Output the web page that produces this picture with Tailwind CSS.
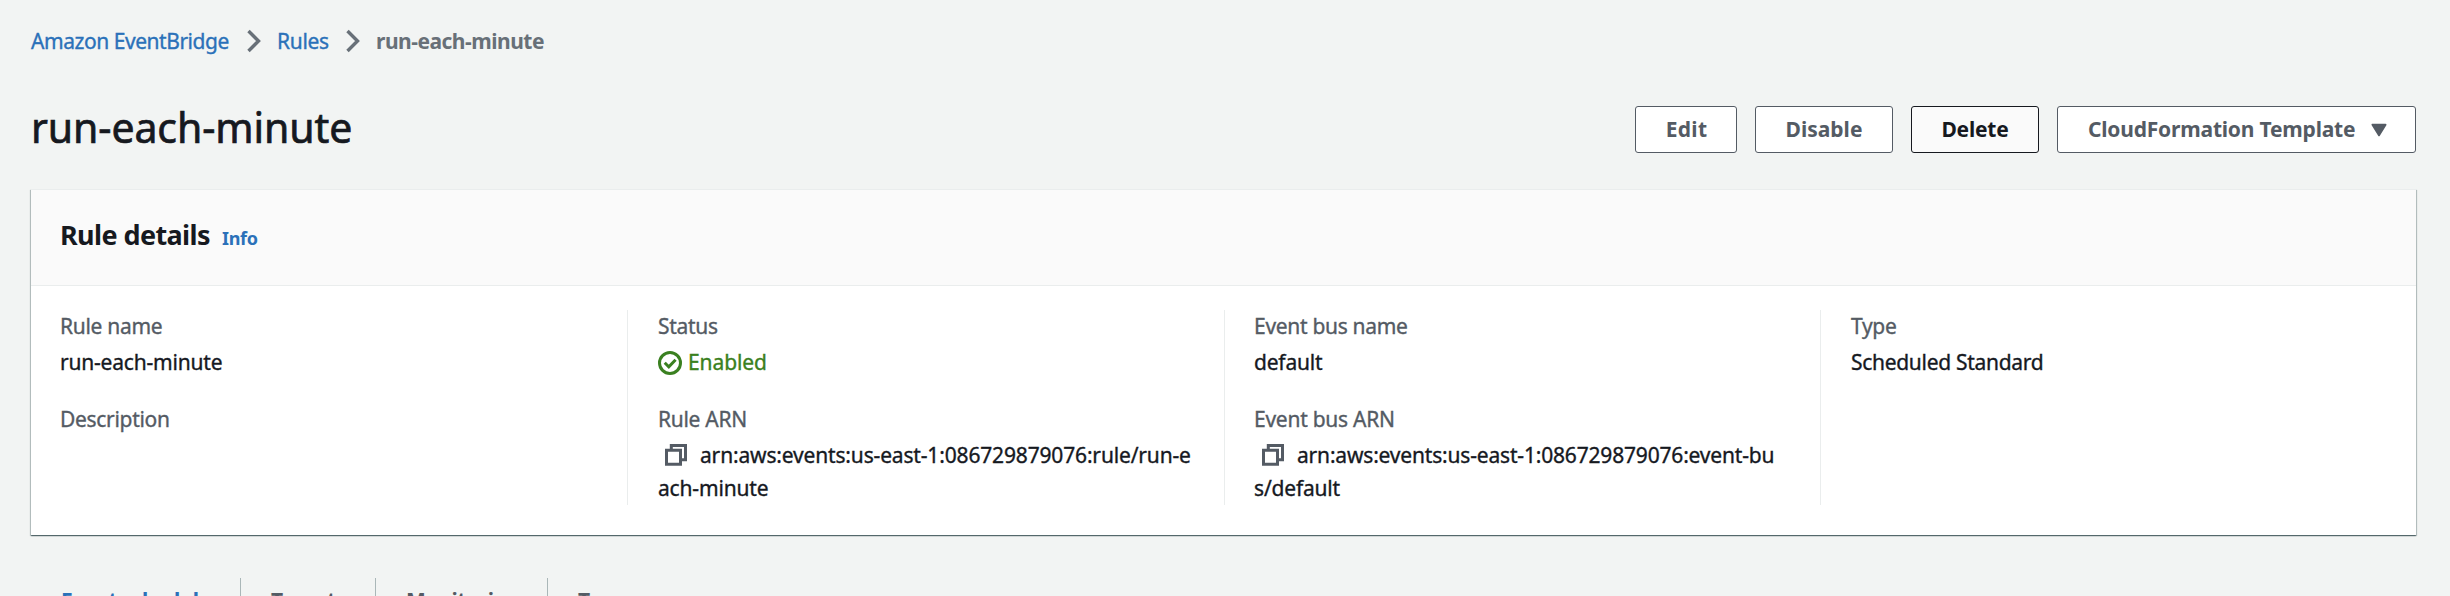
<!DOCTYPE html>
<html lang="en">
<head>
<meta charset="utf-8">
<title>Amazon EventBridge - run-each-minute</title>
<script src="https://cdn.jsdelivr.net/npm/@tailwindcss/browser@4"></script>
</head>
<body class="h-[596px] overflow-hidden bg-[#f2f4f3] font-['Noto_Sans',sans-serif] text-[21px] text-[#16191f]">
<div class="flex flex-col pl-[31px] pr-[34px] pt-[26px]">
  <nav class="flex h-[30px] items-center leading-[30px] text-[#687078]">
    <a class="w-[216px] whitespace-nowrap tracking-[-0.45px] text-[#2b71b9] [-webkit-text-stroke:0.35px]">Amazon EventBridge</a>
    <svg class="h-[24px] w-[14px] shrink-0" viewBox="0 0 14 24" fill="none" stroke="currentColor" stroke-width="3.4"><path d="M1.5 2 11.5 12 1.5 22"/></svg>
    <a class="ml-[16px] w-[69px] tracking-[-0.3px] text-[#2b71b9] [-webkit-text-stroke:0.35px]">Rules</a>
    <svg class="h-[24px] w-[14px] shrink-0" viewBox="0 0 14 24" fill="none" stroke="currentColor" stroke-width="3.4"><path d="M1.5 2 11.5 12 1.5 22"/></svg>
    <span class="ml-[16px] whitespace-nowrap font-bold tracking-[-0.5px]">run-each-minute</span>
  </nav>

  <header class="mt-[50px] flex h-[47px] items-start justify-between">
    <h1 class="-mt-[2px] whitespace-nowrap text-[41px] leading-[46px] tracking-[-0.1px] [-webkit-text-stroke:0.7px]">run-each-minute</h1>
    <div class="flex gap-[18px] font-bold text-[#545b64]">
      <button class="flex h-[47px] w-[102px] items-center justify-center rounded-[3px] border border-[#545b64] bg-white pl-px tracking-[0.3px]">Edit</button>
      <button class="flex h-[47px] w-[138px] items-center justify-center rounded-[3px] border border-[#545b64] bg-white">Disable</button>
      <button class="flex h-[47px] w-[128px] items-center justify-center rounded-[3px] border border-[#16191f] bg-[#fafafa] tracking-[-0.2px] text-[#16191f]">Delete</button>
      <button class="flex h-[47px] w-[359px] items-center justify-between rounded-[3px] border border-[#545b64] bg-white pl-[30px] pr-[28px] tracking-[-0.2px]">
        <span class="whitespace-nowrap">CloudFormation Template</span>
        <svg class="h-[14px] w-[16px]" viewBox="0 0 16 14" fill="currentColor" stroke="currentColor" stroke-width="2" stroke-linejoin="round"><path d="M1.5 1.7h13L8 12.3z"/></svg>
      </button>
    </div>
  </header>

  <section class="mt-[36px] h-[346px] bg-white shadow-[0_1px_1px_0_rgba(0,28,36,0.45),1px_1px_1px_0_rgba(0,28,36,0.2),-1px_1px_1px_0_rgba(0,28,36,0.2)]">
    <div class="flex h-[97px] items-baseline border-b border-t border-[#eaeded] bg-[#fafafa] pl-[29px] pt-[27px]">
      <h2 class="w-[162px] whitespace-nowrap text-[27px] font-bold leading-[36px] tracking-[-0.6px]">Rule details</h2>
      <a class="text-[18px] font-bold tracking-[-0.3px] text-[#2b71b9]">Info</a>
    </div>
    <div class="mt-[24px] grid h-[195px] grid-cols-[596px_597px_596px_596px] leading-[33px] [-webkit-text-stroke:0.35px]">
      <dl class="flex flex-col pl-[29px] pt-px tracking-[-0.3px]">
        <dt class="leading-[30px] text-[#545b64]">Rule name</dt>
        <dd class="mt-[5px] tracking-[-0.2px]">run-each-minute</dd>
        <dt class="mt-[25px] leading-[30px] text-[#545b64]">Description</dt>
      </dl>
      <dl class="flex flex-col border-l border-[#eaeded] pl-[29px] pt-px">
        <dt class="pl-px leading-[30px] tracking-[-0.3px] text-[#545b64]">Status</dt>
        <dd class="mt-[5px] flex items-center gap-[6px] pl-px text-[#3a8020]">
          <svg class="h-[24px] w-[24px]" viewBox="0 0 24 24" fill="none" stroke="currentColor" stroke-width="3"><circle cx="12" cy="12" r="10.5"/><path d="m6.7 11.8 4.1 4 6.8-7"/></svg>
          <span class="tracking-[-0.1px]">Enabled</span>
        </dd>
        <dt class="mt-[25px] pl-px leading-[30px] tracking-[-0.3px] text-[#545b64]">Rule ARN</dt>
        <dd class="mt-[5px] whitespace-nowrap pl-px tracking-[-0.16px]"><svg class="ml-[7px] mr-[13px] inline h-[22px] w-[22px] align-[-3px] text-[#545b64]" viewBox="0 0 22 22" fill="none" stroke="currentColor" stroke-width="3"><path d="M1.5 6.3h14v14h-14zM6.3 6V1.5h14.2v14.2H16"/></svg>arn:aws:events:us-east-1:086729879076:rule/run-e<br>ach-minute</dd>
      </dl>
      <dl class="flex flex-col border-l border-[#eaeded] pl-[29px] pt-px">
        <dt class="leading-[30px] tracking-[-0.3px] text-[#545b64]">Event bus name</dt>
        <dd class="mt-[5px] tracking-[-0.2px]">default</dd>
        <dt class="mt-[25px] leading-[30px] tracking-[-0.25px] text-[#545b64]">Event bus ARN</dt>
        <dd class="mt-[5px] whitespace-nowrap tracking-[-0.18px]"><svg class="ml-[8px] mr-[13px] inline h-[22px] w-[22px] align-[-3px] text-[#545b64]" viewBox="0 0 22 22" fill="none" stroke="currentColor" stroke-width="3"><path d="M1.5 6.3h14v14h-14zM6.3 6V1.5h14.2v14.2H16"/></svg>arn:aws:events:us-east-1:086729879076:event-bu<br>s/default</dd>
      </dl>
      <dl class="flex flex-col border-l border-[#eaeded] pl-[30px] pt-px tracking-[-0.3px]">
        <dt class="leading-[30px] text-[#545b64]">Type</dt>
        <dd class="mt-[5px]">Scheduled Standard</dd>
      </dl>
    </div>
  </section>

  <div class="mt-[43px] flex h-[40px] whitespace-nowrap font-bold leading-[30px] tracking-[-0.4px] text-[#545b64]">
    <a class="w-[210px] border-r border-[#aab7b8] pl-[30px] pt-[7px] tracking-[-0.6px] text-[#2b71b9]">Event schedule</a>
    <a class="w-[135px] border-r border-[#aab7b8] pl-[30px] pt-[7px]">Targets</a>
    <a class="w-[172px] border-r border-[#aab7b8] pl-[30px] pt-[7px]">Monitoring</a>
    <a class="pl-[30px] pt-[7px]">Tags</a>
  </div>
</div>
</body>
</html>
